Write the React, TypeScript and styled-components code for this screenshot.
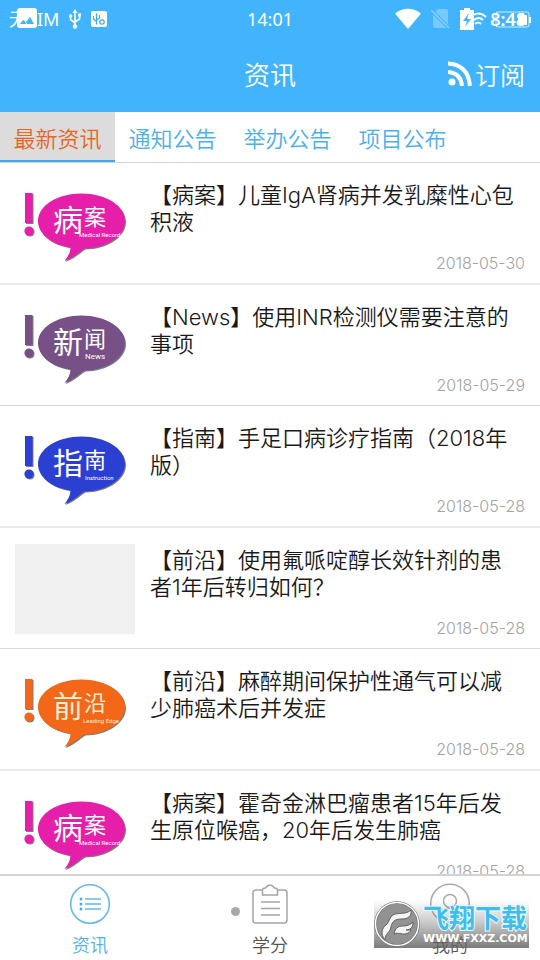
import React, { useState } from "react";
import styled, { createGlobalStyle } from "styled-components";

const GlobalStyle = createGlobalStyle`
  *, *::before, *::after { box-sizing: border-box; }
  body {
    margin: 0;
    background: #fff;
    font-family: Inter, "Noto Sans CJK SC", sans-serif;
    font-weight: 350;
  }
  button { font: inherit; border: 0; padding: 0; background: none; cursor: pointer; }
`;

const Screen = styled.div`
  position: relative;
  display: flex;
  flex-direction: column;
  height: 100vh;
  overflow: hidden;
  background: #fff;
`;

const Header = styled.header`
  flex: none;
  background: #42b4fd;
  color: #fff;
`;

const StatusBar = styled.div`
  display: grid;
  grid-template-columns: 1fr auto 1fr;
  align-items: center;
  height: 37px;
  padding: 0 9px;
  font-family: "Noto Sans", "Noto Sans CJK SC", sans-serif;
  font-size: 18px;
  font-weight: 400;
`;

const StatusGroup = styled.div<{ $end?: boolean }>`
  display: flex;
  align-items: center;
  gap: 10px;
  justify-content: ${(p) => (p.$end ? "flex-end" : "flex-start")};
`;

const Carrier = styled.span`
  position: relative;
  line-height: 24px;
  svg { position: absolute; left: 8px; top: 1px; }
`;

const Clock = styled.time`
  font-size: 18px;
`;

const PowerCluster = styled.span`
  position: relative;
  display: flex;
  justify-content: flex-end;
  width: 71px;
  height: 22px;
  font-weight: 600;
  line-height: 22px;
  padding-right: 5px;
  svg { position: absolute; left: 0; top: 0; }
`;

const TitleBar = styled.div`
  display: grid;
  grid-template-columns: 1fr auto 1fr;
  align-items: center;
  height: 75px;
  padding: 0 15px 2px;
`;

const PageTitle = styled.h1`
  grid-column: 2;
  margin: 0;
  font-size: 26px;
  font-weight: 350;
`;

const Subscribe = styled.button`
  display: flex;
  align-items: center;
  justify-self: end;
  gap: 3px;
  color: #fff;
  font-size: 25px;
`;

const Tabs = styled.nav`
  display: flex;
  flex: none;
  height: 51px;
  border-bottom: 1px solid #d4d4d4;
`;

const Tab = styled.button<{ $active: boolean }>`
  width: 115px;
  height: 50px;
  padding-top: 1px;
  font-size: 22px;
  white-space: nowrap;
  color: ${(p) => (p.$active ? "#e8641f" : "#4cb0e8")};
  background: ${(p) => (p.$active ? "#dcdcdc" : "#fff")};
  border-bottom: 2px solid ${(p) => (p.$active ? "#46a5e2" : "#fff")};
`;

const List = styled.main`
  flex: 1;
  min-height: 0;
  overflow: hidden;
`;

const Article = styled.article`
  display: flex;
  gap: 15px;
  padding: 16px 15px 0;
  border-bottom: 1px solid #d9d9d9;
  &:nth-child(odd) { border-bottom: 2px solid #e9e9e9; }
`;

const Thumb = styled.div<{ $empty?: boolean }>`
  flex: none;
  width: 120px;
  height: 90px;
  margin-bottom: 14px;
  background: ${(p) => (p.$empty ? "#f0f0f0" : "#fff")};
  svg { display: block; }
`;

const Body = styled.div`
  display: flex;
  flex: 1;
  flex-direction: column;
  justify-content: space-between;
  min-width: 0;
  padding-bottom: 9px;
`;

const Headline = styled.h2`
  margin: 3px 0 0;
  font-size: 22px;
  font-weight: 350;
  line-height: 27px;
  color: #1a1a1a;
  white-space: pre-line;
`;

const Published = styled.time`
  align-self: flex-end;
  font-size: 16px;
  font-weight: 300;
  line-height: 22px;
  color: #a3a3a3;
`;

const BottomNav = styled.nav`
  display: flex;
  flex: none;
  height: 86px;
  border-top: 2px solid #d2d2d2;
`;

const NavItem = styled.button<{ $active?: boolean }>`
  display: flex;
  flex: 1;
  flex-direction: column;
  align-items: center;
  gap: 8px;
  padding-top: 7px;
  font-size: 18px;
  line-height: 26px;
  color: ${(p) => (p.$active ? "#52b2e8" : "#555")};
`;

const IconSlot = styled.span`
  position: relative;
  display: block;
  height: 42px;
  svg { display: block; }
`;

const Dot = styled.span`
  position: absolute;
  left: -21px;
  top: 24px;
  width: 9px;
  height: 9px;
  border-radius: 50%;
  background: #a9a9a9;
`;

const Watermark = styled.div`
  position: absolute;
  right: 11px;
  bottom: 12px;
  display: flex;
  align-items: center;
  gap: 3px;
  width: 155px;
  height: 48px;
  background: linear-gradient(rgba(120, 120, 120, 0), rgba(110, 110, 110, 0.35) 45%, rgba(100, 100, 100, 0.85));
  pointer-events: none;
`;

const MarkText = styled.div`
  display: flex;
  flex-direction: column;
  color: #fff;
`;

const MarkName = styled.strong`
  font-family: "Noto Sans CJK SC", sans-serif;
  font-size: 26px;
  font-weight: 700;
  line-height: 28px;
  color: #41bdec;
  -webkit-text-stroke: 2px #e8faff;
  paint-order: stroke fill;
`;

const MarkSite = styled.span`
  font-family: "DejaVu Sans", sans-serif;
  font-size: 11px;
  font-weight: 700;
  line-height: 15px;
`;

type Kind = {
  color: string;
  ink: string;
  first: string;
  second: string;
  label: string;
  labelSize: number;
  labelX: number;
};

const kinds: Record<string, Kind> = {
  record: { color: "#e51fa9", ink: "#fff", first: "病", second: "案", label: "Medical Record", labelSize: 6, labelX: 64 },
  news: { color: "#765087", ink: "#fff", first: "新", second: "闻", label: "News", labelSize: 8, labelX: 70 },
  guide: { color: "#2b3fd3", ink: "#fff", first: "指", second: "南", label: "Instruction", labelSize: 6, labelX: 70 },
  edge: { color: "#f26718", ink: "#ffedcf", first: "前", second: "沿", label: "Leading Edge", labelSize: 6, labelX: 68 },
};

const articles = [
  { kind: "record", title: "【病案】儿童IgA肾病并发乳糜性心包\n积液", date: "2018-05-30" },
  { kind: "news", title: "【News】使用INR检测仪需要注意的\n事项", date: "2018-05-29" },
  { kind: "guide", title: "【指南】手足口病诊疗指南（2018年\n版）", date: "2018-05-28" },
  { kind: "", title: "【前沿】使用氟哌啶醇长效针剂的患\n者1年后转归如何？", date: "2018-05-28" },
  { kind: "edge", title: "【前沿】麻醉期间保护性通气可以减\n少肺癌术后并发症", date: "2018-05-28" },
  { kind: "record", title: "【病案】霍奇金淋巴瘤患者15年后发\n生原位喉癌，20年后发生肺癌", date: "2018-05-28" },
];

const BubbleShape = () => (
  <>
    <path d="M10 14h7.500v30h-7.500z" />
    <circle cx="14" cy="52" r="4.600" />
    <path d="M66.500 14.500c24.300 0 43.500 12.300 43.500 27.500S91 69.500 69.500 69.500c-5 3-11 9.500-20 12.500 3.500-4.500 6-8.500 6-13.500C36.500 65.500 23 55 23 42c0-15.200 19.200-27.500 43.500-27.500z" />
  </>
);

const Bubble = ({ kind }: { kind: Kind }) => (
  <svg width="120" height="90" viewBox="0 0 120 90" role="img" aria-label={kind.label}>
    <g fill="#555" opacity="0.75" transform="translate(1 1)"><BubbleShape /></g>
    <g fill={kind.color}><BubbleShape /></g>
    <g fill={kind.ink} fontFamily='"Noto Sans CJK SC", sans-serif' fontWeight="400">
      <text x="38" y="52" fontSize="30">{kind.first}</text>
      <text x="69" y="46" fontSize="22">{kind.second}</text>
      <text x={kind.labelX} y="58" fontSize={kind.labelSize} fontFamily="Roboto, sans-serif">{kind.label}</text>
    </g>
  </svg>
);

const PictureIcon = () => (
  <svg width="20" height="20" viewBox="0 0 20 20">
    <rect width="20" height="20" rx="3" fill="#fff" />
    <path d="M3 16l3-4 2 1 1 3zM10 16l-1-2 4-5 4 7z" fill="#42b4fd" />
  </svg>
);

const UsbIcon = () => (
  <svg width="12" height="20" viewBox="0 0 12 20" fill="none" stroke="#fff" strokeWidth="1.600">
    <path d="M6 3v14M1.500 7v3.500L6 14M10.500 6v4L6 13" />
    <path d="M6 0l2.500 4h-5z" fill="#fff" stroke="none" />
    <circle cx="6" cy="17.500" r="2.200" fill="#fff" stroke="none" />
    <circle cx="1.700" cy="7" r="1.700" fill="#fff" stroke="none" />
    <path d="M9 4.500h3v3H9z" fill="#fff" stroke="none" />
  </svg>
);

const DebugIcon = () => (
  <svg width="16" height="16" viewBox="0 0 16 16">
    <rect width="16" height="16" rx="2" fill="#fff" />
    <g fill="none" stroke="#42a7ea" strokeWidth="1.200">
      <path d="M5.500 2.500v11M2.500 5v3l3 2.500M8.500 4v3l-3 2" />
      <circle cx="11" cy="11" r="2.200" />
    </g>
  </svg>
);

const WifiIcon = () => (
  <svg width="26" height="21" viewBox="0 0 26 21">
    <path d="M0 5.500C7.500-1 18.500-1 26 5.500L13 21z" fill="#fff" />
  </svg>
);

const NoSimIcon = () => (
  <svg width="19" height="20" viewBox="0 0 19 20">
    <path d="M7 0h8q2 0 2 2v15q0 2-2 2H4q-2 0-2-2V5z" fill="#79c9fe" />
    <path d="M0 1l18 18" stroke="#42b4fd" strokeWidth="3.500" />
    <path d="M0 1l18 18" stroke="#86cffe" strokeWidth="1.500" />
  </svg>
);

const PowerIcon = () => (
  <svg width="71" height="22" viewBox="0 0 71 22" fill="none">
    <path d="M0 2h4V0h6v2h4v20H0z" fill="#fff" />
    <path d="M9 5l-6 8h4l-2 6 6-8H7z" fill="#42b4fd" />
    <g stroke="#fff" strokeWidth="2">
      <path d="M13 7q7-4 13 2M14 12q5-4 9 0M15 16q3-3 6 0" />
    </g>
    <rect x="36" y="4" width="33" height="15" rx="2" stroke="#fff" strokeOpacity=".75" />
    <path d="M69 9h2v6h-2z" fill="#fff" />
    <path d="M58 7h9v10h-9z" fill="#fff" />
  </svg>
);

const FeedIcon = () => (
  <svg width="24" height="25" viewBox="0 0 24 25" fill="none" stroke="#fff" strokeWidth="4">
    <circle cx="4" cy="21" r="3.500" fill="#fff" stroke="none" />
    <path d="M0 11q13 1 14 14M0 2.500q20 1 22 22.500" />
  </svg>
);

const NewsIcon = () => (
  <svg width="42" height="42" viewBox="0 0 42 42" fill="none" stroke="#63b8ea" strokeWidth="1.500">
    <circle cx="21" cy="21" r="19.300" />
    <path d="M16 16h16M16 21h16M16 26h16" />
    <g fill="#52a9df" stroke="none">
      <circle cx="12" cy="16" r="1.500" /><circle cx="12" cy="21" r="1.500" /><circle cx="12" cy="26" r="1.500" />
    </g>
  </svg>
);

const ClipboardIcon = () => (
  <svg width="36" height="42" viewBox="0 0 36 42" fill="none" stroke="#a5a5a5" strokeWidth="1.500">
    <path d="M10 7H4Q1 7 1 10v27q0 3 3 3h28q3 0 3-3V10q0-3-3-3h-6" />
    <path d="M10.500 12V7q0-2 3-2 2-3 4.500-3t4.500 3q3 0 3 2v5z" />
    <path d="M9 19h19M9 25.500h19M9 32h19" />
  </svg>
);

const ProfileIcon = () => (
  <svg width="42" height="42" viewBox="0 0 42 42" fill="none" stroke="#aaa" strokeWidth="1.500">
    <circle cx="21" cy="20.500" r="19.300" />
    <circle cx="21" cy="18" r="6.500" />
    <path d="M8 34q3-9 13-9t13 9" />
  </svg>
);

const MarkLogo = () => (
  <svg width="46" height="46" viewBox="0 0 46 46">
    <circle cx="23" cy="23" r="21.500" fill="#929292" stroke="#666" strokeWidth="2.500" />
    <circle cx="23" cy="23" r="21.500" fill="none" stroke="#fff" strokeWidth="1.500" />
    <path d="M11 39C6 33 8 27 12 24c4-3 3-9 9-11 6-1 12 0 16-4 1 6-3 9-9 9-8 0-10 3-11 8-1 6-6 6-6 13z" fill="#f4f4f4" stroke="#606060" />
    <path d="M20 33c1-6 4-8 9-8 4 0 7-1 10-4 0 6-3 8-7 8h5c-2 4-6 4-9 4-3-1-6-1-8 0z" fill="#f4f4f4" stroke="#606060" />
  </svg>
);

const tabs = ["最新资讯", "通知公告", "举办公告", "项目公布"];

export default function App() {
  const [tab, setTab] = useState(0);
  return (
    <Screen>
      <GlobalStyle />
      <Header>
        <StatusBar>
          <StatusGroup>
            <Carrier>无SIM<PictureIcon /></Carrier>
            <UsbIcon />
            <DebugIcon />
          </StatusGroup>
          <Clock>14:01</Clock>
          <StatusGroup $end>
            <WifiIcon />
            <NoSimIcon />
            <PowerCluster><PowerIcon />8:48</PowerCluster>
          </StatusGroup>
        </StatusBar>
        <TitleBar>
          <PageTitle>资讯</PageTitle>
          <Subscribe><FeedIcon />订阅</Subscribe>
        </TitleBar>
      </Header>
      <Tabs>
        {tabs.map((name, i) => (
          <Tab key={name} $active={i === tab} onClick={() => setTab(i)}>{name}</Tab>
        ))}
      </Tabs>
      <List>
        {articles.map((a) => (
          <Article key={a.title}>
            <Thumb $empty={!a.kind}>{a.kind && <Bubble kind={kinds[a.kind]} />}</Thumb>
            <Body>
              <Headline>{a.title}</Headline>
              <Published>{a.date}</Published>
            </Body>
          </Article>
        ))}
      </List>
      <BottomNav>
        <NavItem $active><IconSlot><NewsIcon /></IconSlot>资讯</NavItem>
        <NavItem><IconSlot><Dot /><ClipboardIcon /></IconSlot>学分</NavItem>
        <NavItem><IconSlot><ProfileIcon /></IconSlot>我的</NavItem>
      </BottomNav>
      <Watermark>
        <MarkLogo />
        <MarkText>
          <MarkName>飞翔下载</MarkName>
          <MarkSite>WWW.FXXZ.COM</MarkSite>
        </MarkText>
      </Watermark>
    </Screen>
  );
}
